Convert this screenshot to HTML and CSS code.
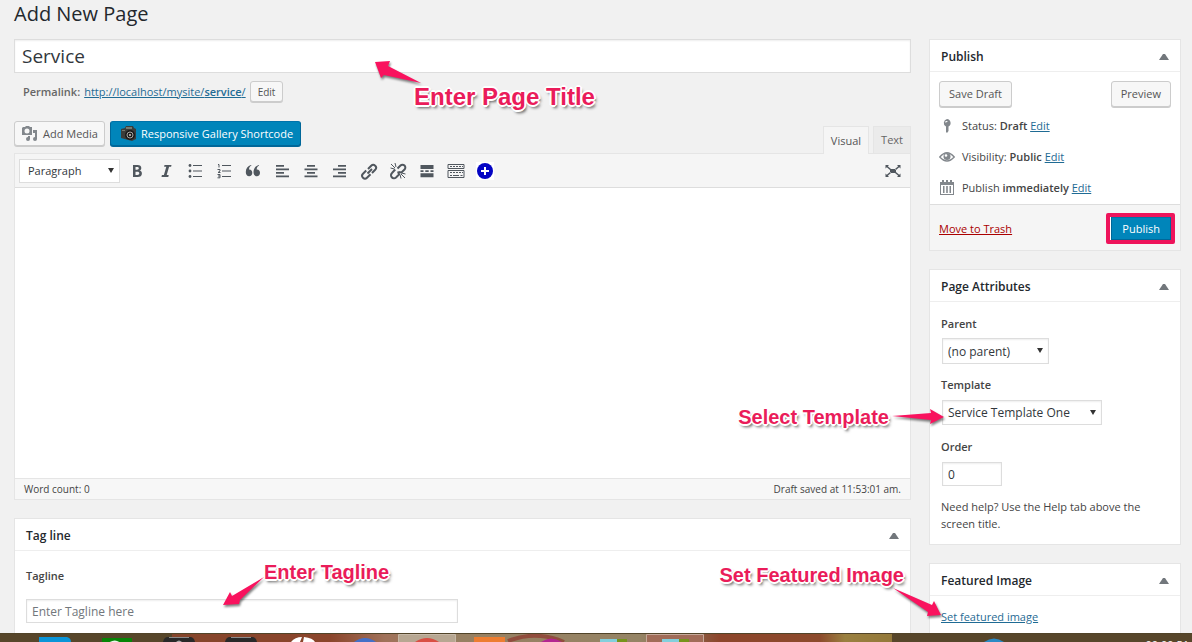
FILE: index.html
```html
<!DOCTYPE html>
<html lang="en">
<head>
<meta charset="utf-8">
<meta name="viewport" content="width=device-width, initial-scale=1">
<title>Add New Page</title>
<link rel="stylesheet" href="styles.css">
</head>
<body>
<div class="wrap">
  <h1 class="page-title">Add New Page</h1>
  <div class="columns">
    <main class="main">
      <div class="title-area">
        <input class="title-input" type="text" value="Service" aria-label="Page title">
        <div class="callout callout-title">
          <svg class="arrow" width="52" height="30" viewBox="0 0 52 30"><path d="M2 3L17 2L15 7L48 24L11 16L8 19Z"/></svg>
          <span class="callout-text callout-large">Enter Page Title</span>
        </div>
      </div>
      <div class="permalink">
        <strong>Permalink:</strong>
        <a href="#">http://localhost/mysite/<b>service</b>/</a>
        <button class="button button-small" type="button">Edit</button>
      </div>
      <div class="editor-tools">
        <div class="media-buttons">
          <button class="button media" type="button">
            <svg width="18" height="18" viewBox="0 0 18 18"><path fill="#82878c" fill-rule="evenodd" d="M2 2h2l1-1h3l1 1h2v8H1V3zM6 3.500a2.500 2.500 0 1 0 0 5a2.500 2.500 0 1 0 0-5zM12 5h4v9a2 2 0 1 1-2-2V8h-2zM7 11h2v3a2 2 0 1 1-2-2z"/></svg>
            Add Media
          </button>
          <button class="button primary gallery" type="button">
            <svg width="18" height="18" viewBox="0 0 18 18"><path fill="#3c3d3a" d="M2 4l4-1l1-2h7l1 2l2 1v10l-4 2L2 13z"/><path fill="#777a70" d="M7 2h6v2H7zM3 5h3v1H3z"/><circle cx="11" cy="10" r="5" fill="#1b1b1b"/><circle cx="11" cy="10" r="3" fill="none" stroke="#a7a5a1"/><circle cx="11" cy="10" r="1" fill="#d6c8c0"/></svg>
            Responsive Gallery Shortcode
          </button>
        </div>
        <div class="tabs">
          <button class="tab tab-active" type="button">Visual</button>
          <button class="tab" type="button">Text</button>
        </div>
      </div>
      <section class="editor">
        <div class="toolbar">
          <span class="select-wrap format"><select class="select" aria-label="Format"><option>Paragraph</option></select></span>
          <button class="tool" type="button" aria-label="Bold"><svg viewBox="0 0 20 20"><path fill-rule="evenodd" d="M6 4h4.500c2.500 0 3.800 1 3.800 2.900c0 1.300-.7 2.200-1.800 2.600c1.500.3 2.400 1.300 2.400 2.900c0 2.300-1.600 3.600-4.300 3.600H6zM8.500 6v2.700H10c1.200 0 1.800-.4 1.800-1.400S11.200 6 10 6zM8.500 10.700V14h1.800c1.300 0 2-.5 2-1.700c0-1.100-.7-1.600-2-1.600z"/></svg></button>
          <button class="tool" type="button" aria-label="Italic"><svg viewBox="0 0 20 20"><path d="M8.500 4h7l-.4 1.700h-2L10.700 14h2l-.4 2H5.500l.4-2h2l2.400-8.300h-2.200z"/></svg></button>
          <button class="tool" type="button" aria-label="Bulleted list"><svg viewBox="0 0 20 20"><path d="M8 4h9v1H8zM8 9.500h9v1H8zM8 15h9v1H8z"/><circle cx="5" cy="4.500" r="1.400"/><circle cx="5" cy="10" r="1.400"/><circle cx="5" cy="15.500" r="1.400"/></svg></button>
          <button class="tool" type="button" aria-label="Numbered list"><svg viewBox="0 0 20 20"><path d="M8 4h9v1H8zM8 9.500h9v1H8zM8 15h9v1H8z"/><path class="line-thin" d="M4 3.500h1v3M3.500 8.500H6V10L4 11.500h2.500M3.500 13.500H6v3.300H3.500M4 15h2"/></svg></button>
          <button class="tool" type="button" aria-label="Quote"><svg viewBox="0 0 20 20"><path d="M8.500 4.500C6.500 5.500 6 7 6 8.500C8 8.300 9.300 9.800 9.300 11.800C9.300 13.900 8 15.200 6.200 15.200C4 15.200 2.800 13.500 2.800 11C2.800 7.500 4.800 4.900 8 4zM16.200 4.500C14.200 5.500 13.700 7 13.700 8.500C15.700 8.300 17 9.800 17 11.800C17 13.900 15.700 15.200 13.900 15.200C11.700 15.200 10.500 13.500 10.500 11C10.500 7.500 12.500 4.900 15.700 4z"/></svg></button>
          <button class="tool" type="button" aria-label="Align left"><svg viewBox="0 0 20 20"><path d="M4 4h8v1.700H4zM4 7.500h13v1.700H4zM4 11h8v1.700H4zM4 14.500h13v1.700H4z"/></svg></button>
          <button class="tool" type="button" aria-label="Align center"><svg viewBox="0 0 20 20"><path d="M6 4h8v1.700H6zM3.500 7.500h13v1.700h-13zM6 11h8v1.700H6zM3.500 14.500h13v1.700h-13z"/></svg></button>
          <button class="tool" type="button" aria-label="Align right"><svg viewBox="0 0 20 20"><path d="M8 4h8v1.700H8zM3 7.500h13v1.700H3zM8 11h8v1.700H8zM3 14.500h13v1.700H3z"/></svg></button>
          <button class="tool" type="button" aria-label="Insert link"><svg viewBox="0 0 20 20"><path class="line" d="M8.500 12.500L13 8M9 8l3.200-3.200a2.800 2.800 0 0 1 4 4L13 12M7.200 9.500L4 12.700a2.800 2.800 0 0 0 4 4L11.500 13.200"/></svg></button>
          <button class="tool" type="button" aria-label="Remove link"><svg viewBox="0 0 20 20"><path class="line" d="M9.500 7.500l3-3a2.800 2.800 0 0 1 4 4L13.500 11.500l-3-.500M7.200 8.500L4 12a2.800 2.800 0 0 0 4 4.500L11 13.500l-1-3"/><path class="line-thin" d="M3 3l4 4M7 2l1 4M2.500 7l4 1M13 13l4 4M13.500 12l4 1M12 13.500l1 4"/></svg></button>
          <button class="tool" type="button" aria-label="Insert Read More tag"><svg viewBox="0 0 20 20"><path d="M3.500 4h13v4h-13zM3.500 9.300h3v1.600h-3zM8.300 9.300h3.400v1.600H8.300zM13.500 9.300h3v1.600h-3zM3.500 12.200h13v4h-13z"/></svg></button>
          <button class="tool" type="button" aria-label="Toolbar toggle"><svg viewBox="0 0 20 20"><path class="line-thin" d="M2 3.500h16v4H2zM2 9.500h16v7H2z"/><path class="line-dash" d="M4 5.500h13M4 11.500h13M4 14.500h2M14.500 14.500h3"/><path class="line-thin" d="M7 14.500h6"/></svg></button>
          <button class="tool tool-add" type="button" aria-label="Insert shortcode"><svg viewBox="0 0 18 18"><circle cx="9" cy="9" r="8" fill="#0404c4"/><path fill="#fff" d="M8 5h2v3h3v2h-3v3H8v-3H5V8h3z"/></svg></button>
          <button class="tool tool-expand" type="button" aria-label="Distraction-free mode"><svg viewBox="0 0 20 20"><path d="M7 8h6v4H7zM2.500 4H6L4.800 5.300L8 8L7 9L3.800 6.300L2.500 7.500zM17.500 4H14l1.200 1.300L12 8l1 1l3.200-2.700L17.500 7.500zM2.500 16H6l-1.200-1.300L8 12l-1-1l-3.200 2.700L2.500 12.500zM17.500 16H14l1.200-1.300L12 12l1-1l3.200 2.700l1.300-1.200z"/></svg></button>
        </div>
        <textarea class="content" aria-label="Page content"></textarea>
        <div class="status-bar"><span>Word count: 0</span><span>Draft saved at 11:53:01 am.</span></div>
      </section>
      <section class="box">
        <h2 class="box-title">Tag line <button class="toggle" type="button" aria-label="Toggle Tag line"></button></h2>
        <div class="box-body">
          <label class="field-label" for="tagline">Tagline</label>
          <div class="tagline-field">
            <input class="text-input" id="tagline" type="text" placeholder="Enter Tagline here">
            <div class="callout callout-tagline">
              <svg class="arrow" width="48" height="34" viewBox="0 0 48 34"><path d="M2 33L9 20L11 24L43 5L19 28L18 32Z"/></svg>
              <span class="callout-text">Enter Tagline</span>
            </div>
          </div>
        </div>
      </section>
    </main>
    <aside class="side">
      <section class="box">
        <h2 class="box-title">Publish <button class="toggle" type="button" aria-label="Toggle Publish"></button></h2>
        <div class="publish-body">
          <div class="publish-actions">
            <button class="button" type="button">Save Draft</button>
            <button class="button" type="button">Preview</button>
          </div>
          <ul class="publish-list">
            <li><svg width="16" height="16" viewBox="0 0 16 16"><path fill="#82878c" fill-rule="evenodd" d="M8 1a4 4 0 0 1 1.500 7.500V13L8 15l-1-1V8.500A4 4 0 0 1 8 1zM6.500 3v2L9 3z"/></svg><span>Status: <b>Draft</b> <a href="#">Edit</a></span></li>
            <li><svg width="16" height="16" viewBox="0 0 16 16"><path fill="none" stroke="#82878c" stroke-width="1.400" d="M.8 8Q8-.5 15.200 8Q8 16 .8 8z"/><circle cx="8" cy="7.500" r="3.500" fill="#82878c"/><circle cx="7" cy="6.500" r="1.300" fill="#fff"/></svg><span>Visibility: <b>Public</b> <a href="#">Edit</a></span></li>
            <li><svg width="16" height="16" viewBox="0 0 16 16"><path fill="#82878c" fill-rule="evenodd" d="M1 2h2V0h2v2h2V0h2v2h2V0h2v2h2v13H1zM2 5v9h12V5zM4 6h1.500v7H4zM7.200 6h1.600v7H7.200zM10.500 6H12v7h-1.500z"/></svg><span>Publish <b>immediately</b> <a href="#">Edit</a></span></li>
          </ul>
        </div>
        <div class="publish-footer">
          <a class="trash" href="#">Move to Trash</a>
          <span class="highlight"><button class="button primary" type="button">Publish</button></span>
        </div>
      </section>
      <section class="box">
        <h2 class="box-title">Page Attributes <button class="toggle" type="button" aria-label="Toggle Page Attributes"></button></h2>
        <div class="attributes">
          <label class="field-label" for="parent">Parent</label>
          <span class="select-wrap parent"><select class="select" id="parent"><option>(no parent)</option></select></span>
          <label class="field-label" for="template">Template</label>
          <div class="template-field">
            <span class="select-wrap template"><select class="select" id="template"><option>Service Template One</option></select></span>
            <div class="callout callout-template">
              <span class="callout-text">Select Template</span>
              <svg class="arrow" width="54" height="20" viewBox="0 0 54 20"><path d="M1 9L40 6L39 2L53 10L39 17L40 13Z"/></svg>
            </div>
          </div>
          <label class="field-label" for="order">Order</label>
          <input class="text-input order" id="order" type="text" value="0">
          <p class="help">Need help? Use the Help tab above the screen title.</p>
        </div>
      </section>
      <section class="box">
        <h2 class="box-title">Featured Image <button class="toggle" type="button" aria-label="Toggle Featured Image"></button></h2>
        <div class="featured">
          <a href="#">Set featured image</a>
          <div class="callout callout-featured">
            <span class="callout-text">Set Featured Image</span>
            <svg class="arrow" width="50" height="32" viewBox="0 0 50 32"><path d="M2 1L41 18L43 14L50 28L36 29L37 25Z"/></svg>
          </div>
        </div>
      </section>
    </aside>
  </div>
</div>
<footer class="taskbar" aria-label="Taskbar">
  <svg class="task-icons" width="1010" height="9" viewBox="0 0 1010 9">
    <path fill="#0b95d8" d="M39 4h28q4 1 4 5H39z"/>
    <path fill="#078507" d="M102 5h30v4h-30z"/><path fill="none" stroke="#e9f5e9" stroke-width="2" d="M110 10q5-3 9 0"/>
    <path fill="#292929" d="M163 9q1-5 5-5h22q4 0 5 5zM225 9q1-5 5-5h22q4 0 5 5z"/><path fill="#8b8b8b" d="M169 4h20v1h-20zM231 4h20v1h-20z"/><path fill="#aaa" d="M176 9q3-3 6 0z"/>
    <path fill="#fff" d="M291 9q4-5 11-5l-2 5zM304 4q9 1 11 5h-12z"/>
    <path fill="#4470c8" d="M354 9q11-8 22 0z"/>
    <path fill="#b7a792" stroke="#c7b9a7" d="M398.500 10V1.500h57V10z"/><path fill="#d94f44" d="M415 9q12-8 24 0z"/>
    <path fill="#ed7d31" d="M474 4h31v5h-31z"/>
    <path fill="none" stroke="#914d3d" stroke-width="4" d="M508 8q28-11 56 1"/><path fill="#b32691" d="M541 9q10-7 21 0z"/>
    <path fill="#83cfdc" d="M600 6h17v3h-17z"/><path fill="#76941c" d="M617 6h10v3h-10z"/>
    <path fill="#a16c58" stroke="#c6a99a" d="M646.500 10V1.500h57V10z"/><path fill="#83cfdc" d="M662 6h17v3h-17z"/><path fill="#76941c" d="M679 6h10v3h-10z"/>
    <path fill="#2b8ac5" d="M984 9q10-7 20 0z"/>
  </svg>
  <time class="clock">00:00:51</time>
</footer>
</body>
</html>
```
FILE: styles.css
```css
* { box-sizing: border-box; }

body {
  margin: 0;
  height: 100vh;
  overflow: hidden;
  background: #f1f1f1;
  color: #444;
  font-family: "Open Sans", "Noto Sans", sans-serif;
  font-size: 11px;
  line-height: 18px;
}

button, input, select, textarea { font: inherit; color: inherit; margin: 0; }
a { color: #1f6b94; }
b, strong { font-weight: 600; }
h1, h2, p, ul { margin: 0; padding: 0; }

.wrap { padding: 0 11px 0 14px; }
.page-title {
  height: 39px;
  color: #23282d;
  font-size: 20px;
  font-weight: 400;
  line-height: 28px;
}
.columns { display: flex; align-items: flex-start; gap: 18px; }
.main { flex: 1; min-width: 0; }
.side { width: 252px; flex: none; }

.title-area { position: relative; }
.title-input {
  display: block;
  width: 100%;
  height: 34px;
  padding: 0 7px;
  border: 1px solid #ddd;
  background: #fff;
  box-shadow: inset 0 1px 2px rgba(0, 0, 0, 0.07);
  color: #32373c;
  font-size: 19px;
}

.permalink {
  display: flex;
  align-items: center;
  gap: 4px;
  margin-top: 8px;
  padding-left: 9px;
  color: #666;
}

.button {
  height: 27px;
  padding: 0 9px 1px;
  border: 1px solid #ccc;
  border-radius: 3px;
  background: #f7f7f7;
  box-shadow: 0 1px 0 #ccc;
  color: #555;
  white-space: nowrap;
}
.button-small { height: 21px; padding: 0 7px; font-size: 10px; }
.primary {
  border-color: #0073aa #006799 #006799;
  background: #0085ba;
  box-shadow: 0 1px 0 #006799;
  color: #fff;
  font-weight: 500;
}

.editor-tools { display: flex; justify-content: space-between; margin-top: 19px; height: 32px; }
.media-buttons { display: flex; align-items: flex-start; gap: 5px; }
.media-buttons .button { display: flex; align-items: center; gap: 4px; height: 25px; padding: 0 6px; }
.media-buttons .gallery { gap: 4px; padding: 0 7px 0 8px; }
.tabs { display: flex; align-items: flex-end; gap: 4px; }
.tab {
  height: 27px;
  padding: 0 7px;
  border: 1px solid #e5e5e5;
  border-bottom: 0;
  background: #ebebeb;
  color: #666;
}
.tab-active { height: 28px; margin-bottom: -1px; background: #f5f5f5; color: #555; }

.editor { border: 1px solid #e5e5e5; background: #fff; }
.toolbar {
  display: flex;
  align-items: center;
  height: 34px;
  padding: 0 3px 0 4px;
  border-bottom: 1px solid #ddd;
  background: #f5f5f5;
}
.tool {
  display: flex;
  align-items: center;
  justify-content: center;
  flex: none;
  width: 29px;
  height: 28px;
  padding: 0;
  border: 0;
  background: none;
}
.tool svg { width: 20px; height: 20px; fill: #50575e; }
.tool .line { fill: none; stroke: #50575e; stroke-width: 2; }
.tool .line-thin { fill: none; stroke: #50575e; stroke-width: 1; }
.tool .line-dash { fill: none; stroke: #50575e; stroke-width: 1; stroke-dasharray: 2 1; }
.tool-add svg { background: #fff; width: 18px; height: 18px; }
.tool-expand { margin-left: auto; }
.content {
  display: block;
  width: 100%;
  height: 290px;
  border: 0;
  padding: 10px;
  background: #fff;
  resize: none;
}
.status-bar {
  display: flex;
  justify-content: space-between;
  padding: 1px 9px;
  border-top: 1px solid #e5e5e5;
  background: #f7f7f7;
  font-size: 10px;
}

.select-wrap { position: relative; display: block; }
.select-wrap::after {
  content: "";
  position: absolute;
  top: 50%;
  right: 6px;
  margin-top: -3px;
  border: 3px solid transparent;
  border-top: 5px solid #333;
  border-bottom: 0;
  pointer-events: none;
}
.select {
  display: block;
  appearance: none;
  width: 100%;
  height: 26px;
  padding: 1px 5px 0;
  border: 1px solid #ddd;
  border-radius: 0;
  background: #fff;
  box-shadow: inset 0 1px 2px rgba(0, 0, 0, 0.07);
  color: #32373c;
  font-size: 12px;
}
.format { width: 101px; margin-right: 2px; flex: none; }
.format .select { height: 24px; padding: 0 8px; box-shadow: none; font-size: 11px; }

.box { margin-bottom: 18px; border: 1px solid #e5e5e5; background: #fff; }
.editor + .box { margin-top: 18px; }
.box-title {
  display: flex;
  align-items: center;
  justify-content: space-between;
  height: 32px;
  padding: 2px 11px 0;
  border-bottom: 1px solid #eee;
  color: #23282d;
  font-size: 12px;
  font-weight: 600;
}
.toggle { width: 10px; height: 12px; padding: 0; border: 0; background: none; }
.toggle::before {
  content: "";
  display: block;
  border: 4px solid transparent;
  border-top: 0;
  border-bottom: 6px solid #72777c;
}
.box-body { padding: 16px 11px 24px; }
.field-label { display: block; font-weight: 600; }
.tagline-field { position: relative; margin-top: 14px; }
.text-input {
  display: block;
  width: 432px;
  max-width: 100%;
  height: 24px;
  padding: 1px 5px 0;
  border: 1px solid #ddd;
  background: #fff;
  box-shadow: inset 0 1px 2px rgba(0, 0, 0, 0.07);
  color: #32373c;
  font-size: 12px;
}
.text-input::placeholder { color: #72777c; opacity: 1; }

.publish-body { padding: 9px 9px 7px; }
.publish-actions { display: flex; justify-content: space-between; }
.publish-actions .button { height: 26px; }
.publish-list { display: grid; gap: 13px; margin-top: 10px; list-style: none; }
.publish-list li { display: flex; align-items: center; gap: 7px; }
.publish-footer {
  display: flex;
  align-items: center;
  justify-content: space-between;
  padding: 8px 5px 6px 9px;
  border-top: 1px solid #ddd;
  background: #f5f5f5;
}
.trash { color: #a00; }
.highlight { display: block; border: 4px solid #ee145b; border-radius: 2px; background: #fff; padding-left: 1px; }
.highlight .button { display: block; height: 23px; padding: 0 10px; border-radius: 0; box-shadow: none; }

.attributes { padding: 13px 11px 12px; }
.parent { width: 107px; margin: 5px 0 12px 1px; }
.template-field { position: relative; margin: 6px 0 13px 1px; }
.template { width: 160px; }
.template .select { height: 25px; }
.order { width: 60px; margin: 6px 0 12px 1px; }
.help { line-height: 17px; }
.featured { position: relative; padding: 12px 11px 30px; }

.callout { position: absolute; z-index: 2; pointer-events: none; }
.callout-text {
  display: block;
  color: #ea1c5a;
  font-family: "Liberation Sans", Arial, sans-serif;
  font-size: 20px;
  font-weight: 700;
  line-height: 24px;
  white-space: nowrap;
  text-shadow: -2px 0 #fff, 2px 0 #fff, 0 -2px #fff, 0 2px #fff, -1px -1px #fff, 1px -1px #fff, -1px 1px #fff, 1px 1px #fff, 2px 3px 3px #555;
}
.callout-large { font-size: 24px; line-height: 28px; }
.arrow { display: block; flex: none; fill: #f9125e; overflow: visible; filter: drop-shadow(1px 2px 1px rgba(0, 0, 0, 0.5)); }
.callout-title { top: 20px; left: 359px; }
.callout-title .callout-text { margin: -6px 0 0 41px; }
.callout-tagline { top: -39px; left: 195px; display: flex; align-items: flex-start; }
.callout-tagline .arrow { margin: 12px -5px 0 0; }
.callout-template { top: 5px; right: calc(100% - 3px); display: flex; align-items: center; gap: 2px; }
.callout-featured { top: -33px; right: 239px; display: flex; flex-direction: column; align-items: flex-end; }
.callout-featured .callout-text { margin-right: 37px; }

.taskbar {
  position: fixed;
  right: 0;
  bottom: 0;
  left: 0;
  z-index: 3;
  display: flex;
  justify-content: space-between;
  height: 9px;
  overflow: hidden;
  border-top: 1px solid #514429;
  background: linear-gradient(90deg, #57462a 172px, #85452b 172px, #8b452b 330px, #a0725a 385px, #978062 460px, #958465 640px, #8a5a40 700px, #8d452b 720px, #8d4b2c 820px, #9a8040 845px, #94793a 892px, #57462a 892px);
}
.task-icons { display: block; flex: none; margin-top: -1px; }
.clock { padding: 2px 3px 0 0; color: #fff; line-height: 18px; }
```
